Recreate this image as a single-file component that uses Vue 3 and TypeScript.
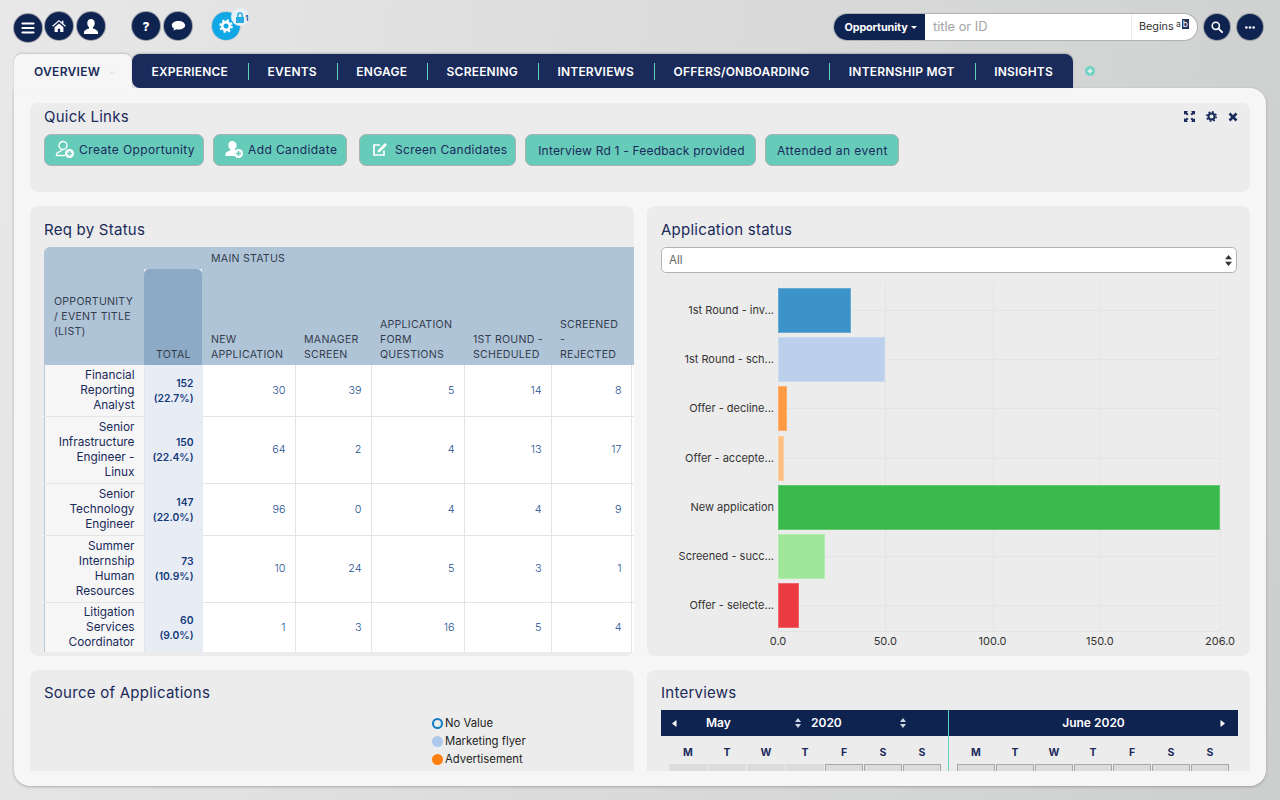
<script setup lang="ts">
const tabs = ['EXPERIENCE', 'EVENTS', 'ENGAGE', 'SCREENING', 'INTERVIEWS', 'OFFERS/ONBOARDING', 'INTERNSHIP MGT', 'INSIGHTS']
const columns = ['NEW APPLICATION', 'MANAGER SCREEN', 'APPLICATION FORM QUESTIONS', '1ST ROUND - SCHEDULED', 'SCREENED - REJECTED']
const rows = [
  { name: 'Financial Reporting Analyst', total: '152', pct: '(22.7%)', vals: [30, 39, 5, 14, 8], h: 51 },
  { name: 'Senior Infrastructure Engineer - Linux', total: '150', pct: '(22.4%)', vals: [64, 2, 4, 13, 17], h: 67 },
  { name: 'Senior Technology Engineer', total: '147', pct: '(22.0%)', vals: [96, 0, 4, 4, 9], h: 52 },
  { name: 'Summer Internship Human Resources', total: '73', pct: '(10.9%)', vals: [10, 24, 5, 3, 1], h: 67 },
  { name: 'Litigation Services Coordinator', total: '60', pct: '(9.0%)', vals: [1, 3, 16, 5, 4], h: 50 },
]
const bars = [
  { label: '1st Round - inv...', value: 34, color: '#3c93c9' },
  { label: '1st Round - sch...', value: 50, color: '#bad0ec' },
  { label: 'Offer - decline...', value: 4, color: '#fd9a43' },
  { label: 'Offer - accepte...', value: 3, color: '#fdc084' },
  { label: 'New application', value: 206, color: '#3aba4c' },
  { label: 'Screened - succ...', value: 22, color: '#9fe69b' },
  { label: 'Offer - selecte...', value: 10, color: '#ec3b40' },
]
const ticks = [
  { label: '0.0', v: 0 }, { label: '50.0', v: 50 }, { label: '100.0', v: 100 }, { label: '150.0', v: 150 }, { label: '206.0', v: 206 },
]
const pct = (v: number) => `${(v / 206) * 100}%`
const days = ['M', 'T', 'W', 'T', 'F', 'S', 'S']
const legend = [
  { label: 'No Value', cls: 'ring' },
  { label: 'Marketing flyer', cls: 'blue' },
  { label: 'Advertisement', cls: 'orange' },
]
</script>

<template>
  <div class="page">
    <header class="top">
      <div class="left-tools">
        <button class="round burger"><svg width="14" height="12" viewBox="0 0 14 12"><path d="M1.500 1.500h11M1.500 6h11M1.500 10.500h11" stroke="#fff" stroke-width="2.200" stroke-linecap="round"/></svg></button>
        <button class="round"><svg width="14" height="12" viewBox="0 0 17 15"><path fill="#fff" d="M8.500 0 0 7.200l1 1.100L8.500 2l7.500 6.300 1-1.100-3-2.600V1h-2v2L8.500 0zM3 9v6h4v-4h3v4h4V9L8.500 4.400 3 9z"/></svg></button>
        <button class="round"><svg width="16" height="15" viewBox="0 0 17 16"><path fill="#fff" d="M8.500 0C6 0 4.500 2 4.500 4.500c0 1.800.8 3.300 1.900 4.300v1.200C4 10.800 1 11.800 1 14.500V16h15v-1.500c0-2.700-3-3.700-5.400-4.500V8.800c1.100-1 1.900-2.500 1.900-4.300C12.500 2 11 0 8.500 0z"/></svg></button>
        <span class="gap1"></span>
        <button class="round q">?</button>
        <button class="round"><svg width="15" height="12" viewBox="0 0 18 14"><path fill="#fff" d="M9 1C4.500 1 1 3.200 1 6.200c0 1.700 1.100 3.100 2.800 4-.2.900-.8 1.700-1.400 2.300 1.500-.1 2.900-.7 3.900-1.500.8.200 1.700.3 2.700.3 4.500 0 8-2.200 8-5.100S13.500 1 9 1z"/></svg></button>
        <span class="gap2"></span>
        <div class="gear-wrap">
          <button class="round blue-round">
            <svg width="14" height="14" viewBox="0 0 16 16"><circle cx="8" cy="8" r="4.400" fill="none" stroke="#fff" stroke-width="3"/><circle cx="8" cy="8" r="6.600" fill="none" stroke="#fff" stroke-width="2.400" stroke-dasharray="2.600 2.580"/></svg>
          </button>
          <span class="lock-badge">
            <svg width="10" height="11" viewBox="0 0 10 11"><path fill="#29a9e1" d="M1 5h8v6H1z"/><path fill="none" stroke="#29a9e1" stroke-width="1.500" d="M2.800 5V3.200a2.200 2.200 0 0 1 4.400 0V5"/></svg>
            <b>1</b>
          </span>
        </div>
      </div>
      <div class="right-tools">
        <div class="search">
          <div class="search-type">Opportunity <i class="caret"></i></div>
          <div class="search-input">title or ID</div>
          <div class="search-mode">Begins <span class="ab"><span>a</span><em>b</em></span></div>
        </div>
        <button class="round small"><svg width="12" height="12" viewBox="0 0 13 13"><circle cx="5.200" cy="5.200" r="3.900" fill="none" stroke="#fff" stroke-width="1.700"/><path d="m8.200 8.200 3.800 3.800" stroke="#fff" stroke-width="2" stroke-linecap="round"/></svg></button>
        <button class="round small"><svg width="10" height="3" viewBox="0 0 11 3"><circle cx="1.500" cy="1.500" r="1.400" fill="#fff"/><circle cx="5.500" cy="1.500" r="1.400" fill="#fff"/><circle cx="9.500" cy="1.500" r="1.400" fill="#fff"/></svg></button>
      </div>
    </header>

    <nav class="tabbar">
      <div class="tab-active">OVERVIEW <svg class="chev" width="7" height="4" viewBox="0 0 7 4"><path d="m.5.500 3 2.500 3-2.500" fill="none" stroke="#c5dcd8" stroke-width="1"/></svg></div>
      <div class="tabs">
        <div v-for="t in tabs" :key="t" class="tab">{{ t }}</div>
      </div>
      <svg class="plus" width="10" height="10" viewBox="0 0 10 10"><circle cx="5" cy="5" r="5" fill="#6ed3c2"/><path d="M5 2.500v5M2.500 5h5" stroke="#e6f3f0" stroke-width="1.600"/></svg>
    </nav>

    <main class="sheet">
      <div class="scroll">
        <section class="panel quick">
          <div class="panel-tools">
            <svg width="11" height="11" viewBox="0 0 11 11"><path fill="#1a2a5a" d="M0 0h4L2.800 1.200 4.500 3 3 4.500 1.200 2.800 0 4zM11 0v4L9.800 2.800 8 4.500 6.500 3l1.700-1.800L7 0zM0 11V7l1.200 1.200L3 6.500 4.500 8 2.800 9.800 4 11zM11 11H7l1.200-1.200L6.500 8 8 6.500l1.800 1.700L11 7z"/></svg>
            <svg width="11" height="11" viewBox="0 0 11 11"><circle cx="5.500" cy="5.500" r="3" fill="none" stroke="#1a2a5a" stroke-width="2"/><circle cx="5.500" cy="5.500" r="4.600" fill="none" stroke="#1a2a5a" stroke-width="1.700" stroke-dasharray="1.800 1.810"/></svg>
            <svg width="10" height="10" viewBox="0 0 10 10"><path d="m1.500 1.500 7 7m0-7-7 7" stroke="#1a2a5a" stroke-width="2.500"/></svg>
          </div>
          <h2 class="quick-title">Quick Links</h2>
          <div class="links">
            <a class="link l1"><svg width="20" height="19" viewBox="0 0 20 19"><circle cx="8" cy="5.500" r="4" fill="none" stroke="#fff" stroke-width="1.400"/><path d="M6 9.500v1.500c-2 .7-4.500 1.500-4.500 3.500v1h9" fill="none" stroke="#fff" stroke-width="1.400"/><circle cx="14.500" cy="13.500" r="4.500" fill="#fff"/><path d="M14.500 11v5M12 13.500h5" stroke="#67cbba" stroke-width="1.500"/></svg>Create Opportunity</a>
            <a class="link l2"><svg width="20" height="19" viewBox="0 0 20 19"><path fill="#fff" d="M8 1C5.700 1 4.400 3 4.400 5.200c0 1.600.7 2.900 1.700 3.800v1.500c-2 .7-4.600 1.500-4.600 3.500V16h9.500V9c1-.9 1.700-2.200 1.700-3.800C12.700 3 10.300 1 8 1z"/><circle cx="14.500" cy="13.500" r="4.500" fill="#fff"/><path d="M14.500 11v5M12 13.500h5" stroke="#67cbba" stroke-width="1.500"/></svg>Add Candidate</a>
            <a class="link l3"><svg width="16" height="15" viewBox="0 0 16 15"><path d="M12 8.500V13H2V3h6" fill="none" stroke="#fff" stroke-width="1.700"/><path fill="#fff" d="m6 8 7-7 2 2-7 7-2.500.5z"/></svg>Screen Candidates</a>
            <a class="link l4">Interview Rd 1 - Feedback provided</a>
            <a class="link l5">Attended an event</a>
          </div>
        </section>

        <div class="grid">
          <section class="panel req">
            <h2>Req by Status</h2>
            <div class="table-clip">
              <table>
                <colgroup><col class="c0"><col class="c1"><col class="c2"><col class="c3"><col class="c4"><col class="c5"><col class="c6"><col class="c7"></colgroup>
                <thead>
                  <tr class="hr1">
                    <th rowspan="2" class="th-title">OPPORTUNITY / EVENT TITLE (LIST)</th>
                    <th class="th-blank"></th>
                    <th colspan="6" class="th-main">MAIN STATUS</th>
                  </tr>
                  <tr class="hr2">
                    <th class="th-total">TOTAL</th>
                    <th v-for="c in columns" :key="c">{{ c }}</th>
                    <th></th>
                  </tr>
                </thead>
                <tbody>
                  <tr v-for="r in rows" :key="r.name" :style="{ height: r.h + 'px' }">
                    <td class="name">{{ r.name }}</td>
                    <td class="total">{{ r.total }}<br>{{ r.pct }}</td>
                    <td v-for="(v, i) in r.vals" :key="i" class="num">{{ v }}</td>
                    <td class="num"></td>
                  </tr>
                </tbody>
              </table>
            </div>
          </section>

          <section class="panel app">
            <h2>Application status</h2>
            <div class="select">All<svg width="7" height="11" viewBox="0 0 7 11"><path fill="#333" d="M3.500 0 7 4.300H0zM3.500 11 0 6.700h7z"/></svg></div>
            <div class="chart">
              <div class="labels">
                <div v-for="b in bars" :key="b.label" class="label">{{ b.label }}</div>
              </div>
              <div class="plot">
                <span v-for="t in ticks" :key="t.v" class="vline" :style="{ left: pct(t.v) }"></span>
                <div v-for="b in bars" :key="b.label" class="bar-row">
                  <div class="bar" :style="{ width: pct(b.value), background: b.color }"></div>
                </div>
                <span v-for="t in ticks" :key="'l' + t.v" class="tick" :style="{ left: pct(t.v) }">{{ t.label }}</span>
              </div>
            </div>
          </section>

          <section class="panel src">
            <h2>Source of Applications</h2>
            <ul class="legend">
              <li v-for="l in legend" :key="l.label"><i :class="l.cls"></i>{{ l.label }}</li>
            </ul>
          </section>

          <section class="panel cal">
            <h2>Interviews</h2>
            <div class="cal-head">
              <div class="cal-left">
                <svg class="nav" width="5" height="7" viewBox="0 0 5 7"><path fill="#fff" d="M4.500 0v7L0 3.500z"/></svg>
                <span class="m">May</span>
                <svg class="spin s1" width="6" height="10" viewBox="0 0 6 10"><path fill="#cfd6e4" d="M3 0l3 4H0zM3 10 0 6h6z"/></svg>
                <span class="y">2020</span>
                <svg class="spin s2" width="6" height="10" viewBox="0 0 6 10"><path fill="#cfd6e4" d="M3 0l3 4H0zM3 10 0 6h6z"/></svg>
              </div>
              <div class="cal-right">
                <span>June 2020</span>
                <svg width="5" height="7" viewBox="0 0 5 7"><path fill="#fff" d="M.5 0v7L5 3.500z"/></svg>
              </div>
            </div>
            <div class="cal-body">
              <div class="month mleft">
                <div v-for="(d, i) in days" :key="i" class="dow">{{ d }}</div>
                <div v-for="(d, i) in days" :key="'c' + i" class="cell" :class="{ off: i < 4 }"></div>
              </div>
              <div class="month mright">
                <div v-for="(d, i) in days" :key="i" class="dow">{{ d }}</div>
                <div v-for="(d, i) in days" :key="'c' + i" class="cell"></div>
              </div>
            </div>
          </section>
        </div>
      </div>
    </main>
  </div>
</template>

<style>
html, body { margin: 0; height: 100%; overflow: hidden; }
</style>

<style scoped>
.page {
  width: 1280px; height: 800px; overflow: hidden; box-sizing: border-box;
  background: linear-gradient(100deg, #e8e8e8 0%, #dcdcdc 45%, #cdcfcf 100%);
  font-family: Inter, "Noto Sans", sans-serif; color: #1a2a5a;
}
button { border: 0; padding: 0; margin: 0; font: inherit; }

.top { height: 54px; display: flex; justify-content: space-between; box-sizing: border-box; padding: 12px 17px 0 14px; }
.left-tools { display: flex; align-items: flex-start; gap: 4px; }
.round {
  width: 28px; height: 28px; border-radius: 50%; background: #0f2350; display: flex; align-items: center; justify-content: center;
  box-shadow: 0 0 0 1px #9a9da5; flex: none; box-sizing: border-box;
}
.burger { margin-top: 2px; margin-right: -1px; }
.q { color: #fff; font-weight: 800; font-size: 12px; }
.gap1 { width: 19px; }
.gap2 { width: 12px; }
.gear-wrap { position: relative; }
.blue-round { background: #10a7e6; box-shadow: 0 0 0 1px #c7ced3; }
.lock-badge {
  position: absolute; left: 19px; top: -4px; width: 18px; height: 18px; border-radius: 50%; background: #e7f1f6;
  display: flex; align-items: center; justify-content: center;
}
.lock-badge svg { margin-left: -1px; }
.lock-badge b { position: absolute; left: 14px; top: 6px; font-size: 8px; line-height: 9px; color: #3a5f9a; font-weight: 700; }
.right-tools { display: flex; align-items: flex-start; gap: 6px; padding-top: 2px; }
.small { width: 26px; height: 26px; }
.right-tools .small + .small { margin-left: 1px; }
.search { display: flex; width: 363px; height: 26px; border-radius: 13px; overflow: hidden; background: #fff; box-shadow: 0 0 0 1px #b0b2b6; margin-right: 1px; }
.search-type { width: 91px; background: #0f2350; color: #fff; font-size: 10.800px; font-weight: 700; display: flex; align-items: center; justify-content: center; gap: 3px; letter-spacing: -.1px; padding-left: 2px; box-sizing: border-box; }
.caret { width: 0; height: 0; border: 3px solid transparent; border-top: 3.500px solid #fff; border-bottom: 0; }
.search-input { flex: 1; color: #a4a4a4; font-size: 12.800px; line-height: 26px; padding-left: 8px; }
.search-mode { width: 66px; border-left: 1px solid #ececec; font-size: 10.800px; color: #333; line-height: 26px; padding-left: 7px; box-sizing: border-box; position: relative; }
.ab { position: absolute; left: 44px; top: 5px; font-size: 8.500px; line-height: 10px; display: flex; }
.ab em { font-style: normal; background: #20315c; color: #fff; padding: 0 1px; margin-left: 1px; }

.tabbar { height: 34px; display: flex; align-items: stretch; padding-left: 14px; position: relative; z-index: 1; }
.tab-active {
  width: 118px; box-sizing: border-box; background: #f6f6f6; border-radius: 8px 8px 0 0; font-size: 12px; font-weight: 600; line-height: 35px;
  padding-left: 20px; color: #1a2a5a; box-shadow: 0 -1px 2px rgba(0,0,0,.15); letter-spacing: .3px; white-space: nowrap;
}
.chev { margin-left: 5px; vertical-align: 1px; }
.tabs { display: flex; background: #1a2a5a; border-radius: 8px 8px 0 0; border-bottom-left-radius: 8px; height: 34px; box-shadow: 0 -1px 2px rgba(0,0,0,.2); }
.tab { position: relative; color: #fff; font-size: 12px; font-weight: 600; line-height: 35px; padding: 0 20px 0 19.500px; white-space: nowrap; letter-spacing: .2px; }
.tab + .tab::before { content: ""; position: absolute; left: 0; top: 9px; height: 17px; width: 1px; background: #5ed1b8; }
.plus { margin: 12px 0 0 12px; }

.sheet {
  margin: 0 14px; height: 698px; width: 1252px; box-sizing: border-box; background: #f6f6f6; border-radius: 0 16px 16px 16px;
  box-shadow: 0 1px 3px rgba(0,0,0,.25); padding: 15px 16px 15px 16px;
}
.scroll { height: 668px; overflow: hidden; }
.panel { background: #ececec; border-radius: 8px; box-sizing: border-box; position: relative; }
h2 { margin: 0; font-size: 15px; font-weight: 400; color: #1a2a5a; line-height: 18px; letter-spacing: .25px; }
.quick { height: 89px; padding: 5px 14px 0; }
.panel-tools { position: absolute; right: 12px; top: 8px; display: flex; gap: 11px; align-items: center; }
.links { display: flex; gap: 9px; margin-top: 8px; }
.link {
  height: 32px; box-sizing: border-box; background: #67cbba; border: 1px solid #a9b2b0; border-radius: 7px; font-size: 12px; color: #1a2a5a;
  display: flex; align-items: center; white-space: nowrap; padding: 0 0 1px 10px; letter-spacing: .4px; gap: 4px;
}
.l1 { width: 160px; }
.l2 { width: 134px; }
.l3 { width: 157px; margin-left: 3px; gap: 7px; padding-left: 12px; letter-spacing: .3px; }
.l4 { width: 231px; justify-content: center; padding: 1px 0 0 2px; letter-spacing: .2px; }
.l5 { width: 134px; justify-content: center; padding: 1px 0 0 1px; letter-spacing: .45px; }
.grid { display: grid; grid-template-columns: 604px 603px; column-gap: 13px; grid-template-rows: 450px 120px; row-gap: 14px; margin-top: 14px; }

.req { padding: 15px 0 0 14px; overflow: hidden; }
.table-clip { margin-top: 8px; overflow: hidden; height: 405px; }
table { border-collapse: collapse; table-layout: fixed; width: 654px; font-size: 10.800px; }
.c0 { width: 100px; } .c1 { width: 58px; } .c2 { width: 93px; } .c3 { width: 76px; } .c4 { width: 93px; } .c5 { width: 87px; } .c6 { width: 80px; } .c7 { width: 67px; }
thead th { background: #b0c4d8; color: #333c4c; font-weight: 400; text-align: left; padding: 0 9px 3px; vertical-align: bottom; line-height: 15px; font-size: 10.600px; letter-spacing: .25px; }
.hr1 { height: 22px; }
.hr2 { height: 96px; }
thead tr:first-child th:first-child { border-top-left-radius: 6px; }
.th-title { vertical-align: middle; padding: 20px 8px 0 10px; }
thead th.th-main { vertical-align: top; padding: 4px 9px 3px; }
thead th.th-blank { padding: 0; }
thead th.th-total { background: #8caac5; border-radius: 5px 5px 0 0; padding: 0 11px 3px 12px; }
.hr2 th:nth-child(5) { padding-right: 2px; }
tbody td { border: 1px solid #e4e4e4; border-left: 0; border-top: 0; background: #fff; font-size: 10.800px; line-height: 15px; padding: 0 9px; }
tbody td.name { background: #f6f6f6; text-align: right; color: #1a2a5a; font-weight: 400; box-shadow: inset 1px 0 #b6c8dc; font-size: 11.800px; padding: 1px 9px 0 12px; }
tbody td.total { background: #e8edf5; text-align: right; color: #133a7c; font-weight: 600; padding: 1px 8px 0 0; border-color: #e8edf5; font-size: 10.300px; }
.num { text-align: right; color: #23508f; font-weight: 300; }

.app { padding: 15px 14px 0; }
.select {
  margin-top: 8px; height: 26px; width: 576px; box-sizing: border-box; background: #fff; border: 1px solid #b4b4b4; border-radius: 5px; font-size: 11.500px; color: #666;
  display: flex; align-items: center; justify-content: space-between; padding: 0 4px 0 7px;
}
.chart { display: flex; margin-top: 10px; height: 350px; }
.labels { width: 117px; padding-top: 5px; box-sizing: border-box; display: flex; flex-direction: column; gap: 4.200px; }
.label { height: 45px; line-height: 45px; padding-right: 4px; text-align: right; font-size: 11px; color: #333; white-space: nowrap; }
.plot { position: relative; width: 442px; height: 349px; padding-top: 5px; box-sizing: border-box; display: flex; flex-direction: column; gap: 4.200px; border-bottom: 1px solid #e2e2e2; }
.vline { position: absolute; top: 0; bottom: 0; width: 1px; background: #e4e4e4; }
.bar-row { height: 45px; position: relative; }
.bar-row::before { content: ""; position: absolute; left: 0; right: 0; top: 22px; height: 1px; background: #e4e4e4; }
.bar { position: relative; height: 45px; box-sizing: border-box; border: 1px solid rgba(255,255,255,.22); }
.tick { position: absolute; top: 351px; transform: translateX(-50%); font-size: 11px; line-height: 14px; color: #333; }

.src { padding: 14px 14px 0; overflow: hidden; }
.legend { list-style: none; margin: 0; padding: 0; position: absolute; left: 402px; top: 44px; font-size: 11.300px; color: #222; }
.legend li { height: 18px; display: flex; align-items: center; gap: 2px; white-space: nowrap; }
.legend i { width: 11px; height: 11px; border-radius: 50%; box-sizing: border-box; flex: none; margin-right: 0; }
.legend .ring { border: 2px solid #0f7dc0; }
.legend .blue { background: #aec9ec; }
.legend .orange { background: #ff7f0e; }

.cal { padding: 14px 12px 0 14px; overflow: hidden; }
.cal-head { margin-top: 8px; height: 26px; width: 577px; display: flex; background: #0f2350; color: #fff; font-size: 12px; font-weight: 600; line-height: 26px; }
.cal-left { width: 287px; display: flex; align-items: center; padding-left: 11px; box-sizing: border-box; }
.nav { flex: none; }
.m { margin-left: 29px; width: 73px; flex: none; }
.s1 { margin-left: 16px; flex: none; }
.y { margin-left: 10px; width: 81px; flex: none; }
.s2 { margin-left: 8px; flex: none; }
.cal-right { flex: 1; border-left: 1px solid #5ed1b8; position: relative; display: flex; align-items: center; justify-content: center; }
.cal-right svg { position: absolute; right: 13px; top: 10px; }
.cal-body { display: flex; width: 577px; height: 41px; }
.month { display: grid; grid-template-columns: repeat(7, 38px); column-gap: 1px; grid-template-rows: 28px 20px; align-content: start; }
.mleft { width: 287px; box-sizing: border-box; padding-left: 8px; }
.mright { flex: 1; border-left: 1px solid #5ed1b8; padding-left: 8px; }
.dow { text-align: center; font-size: 10.500px; font-weight: 700; color: #1a2a5a; line-height: 14px; padding-top: 10px; }
.cell { border: 1px solid #a8a8a8; background: #dcdcdc; box-sizing: border-box; }
.cell.off { border-color: #dcdcdc; }
</style>
